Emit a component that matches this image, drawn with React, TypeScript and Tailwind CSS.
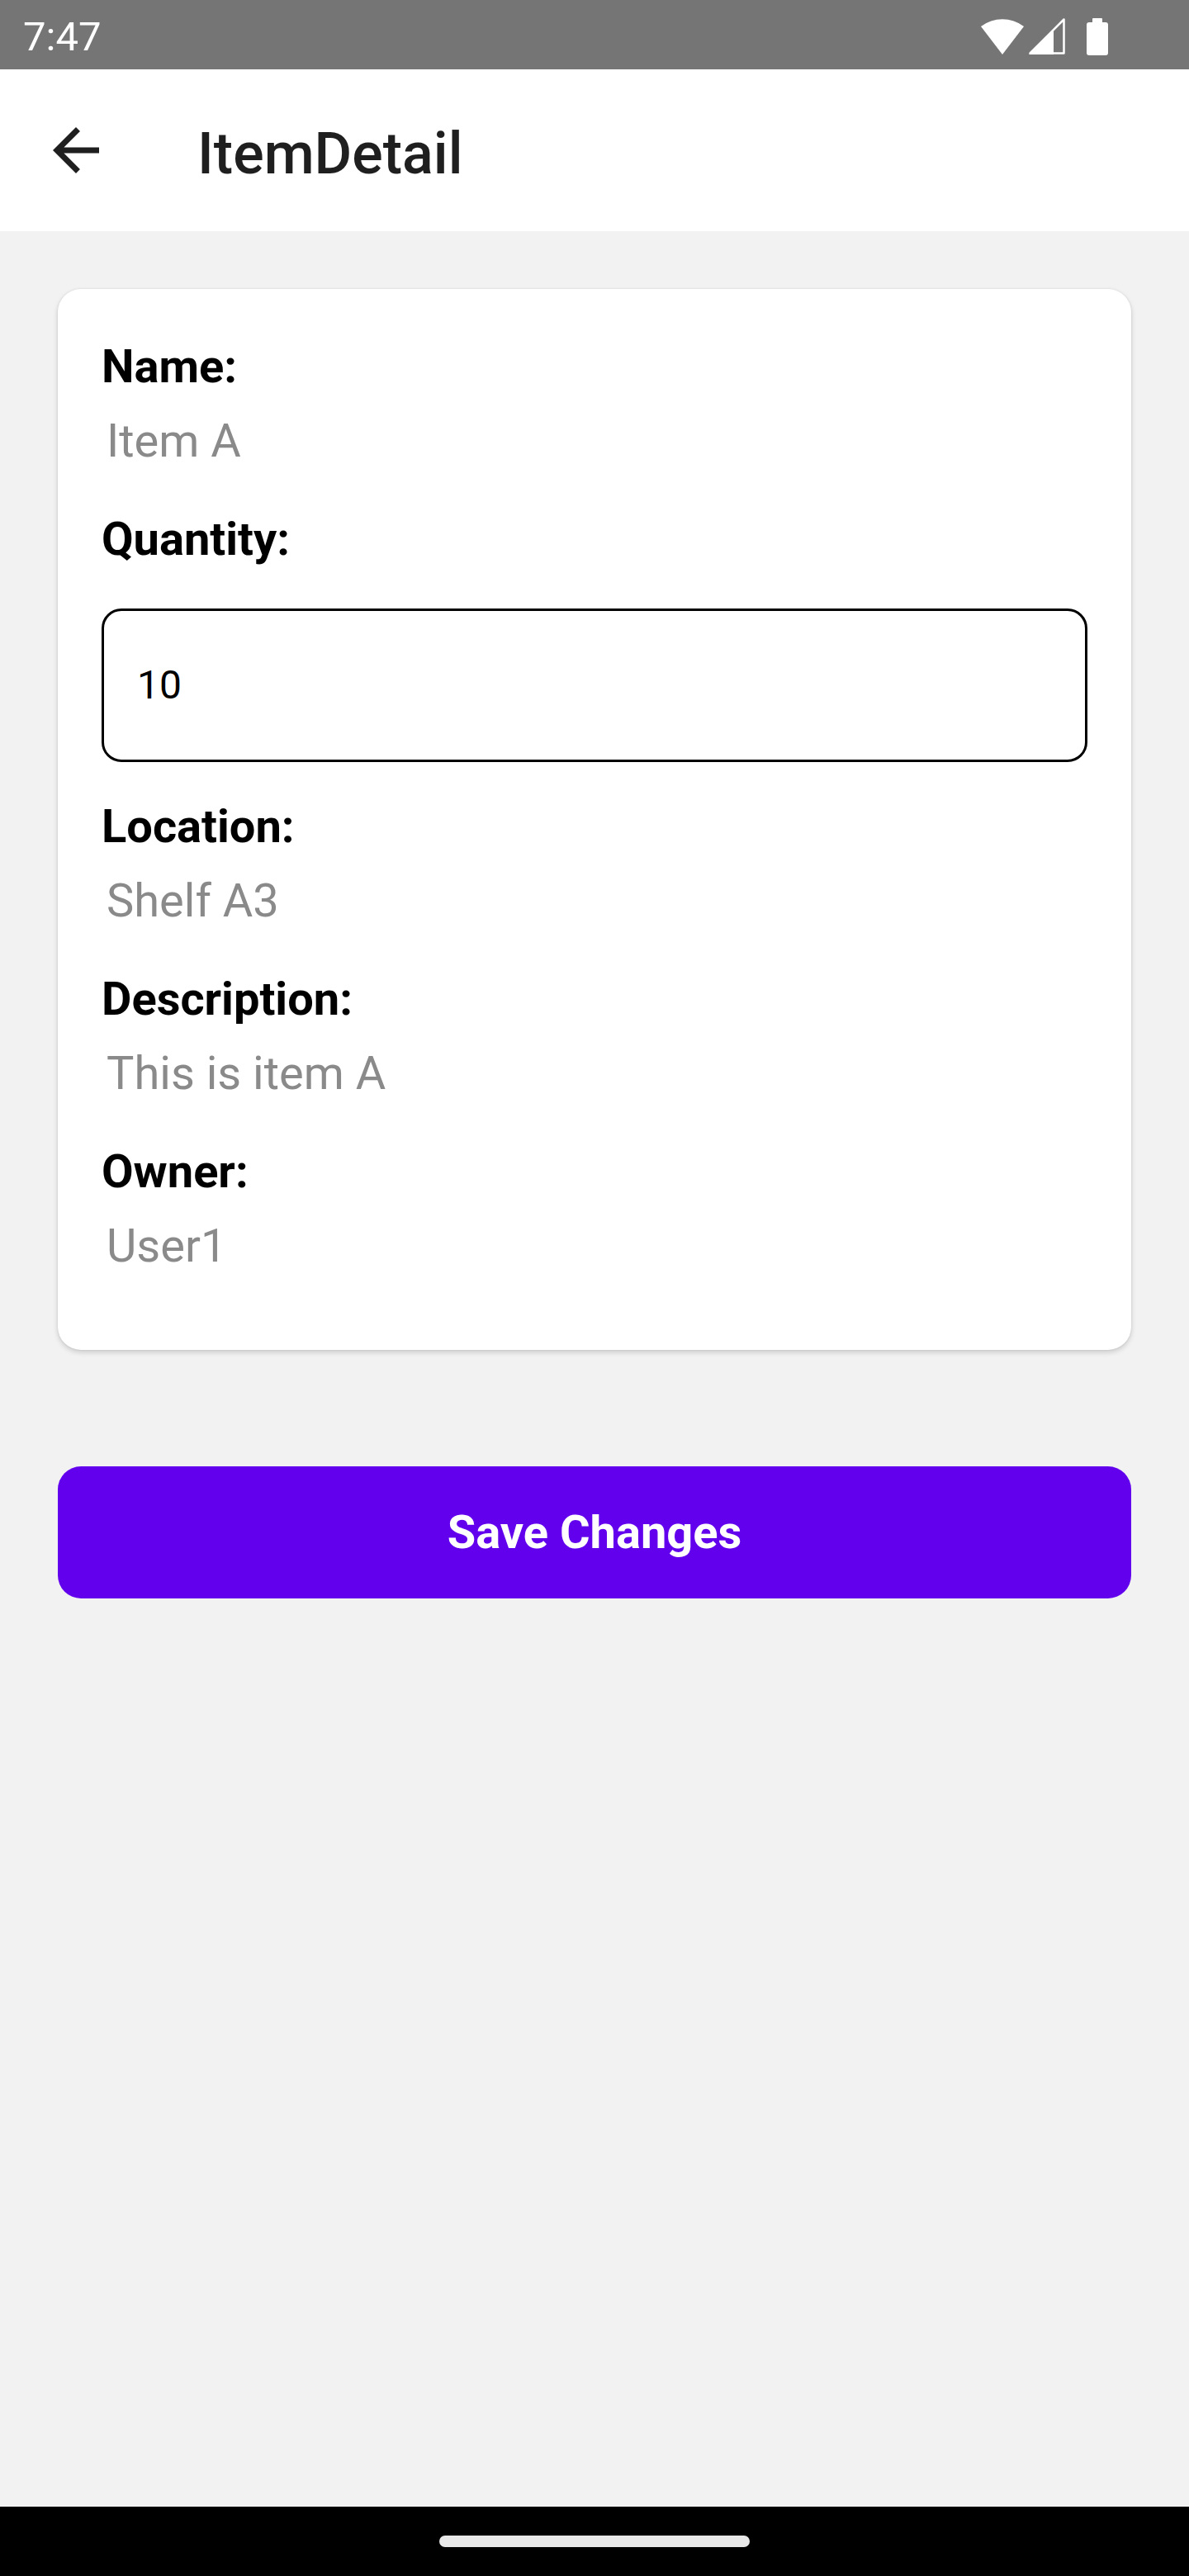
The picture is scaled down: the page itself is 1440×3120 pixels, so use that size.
import React from "react";

const StatusIcons = () => (
  <div className="flex items-center">
    <svg width="52" height="44" viewBox="0 0 52 44" className="mt-[3px]">
      <path d="M26 44 L0 10 A43 43 0 0 1 52 10 Z" fill="#fff" />
    </svg>
    <svg width="44" height="44" viewBox="0 0 44 44" className="ml-[6px] mt-[3px]">
      <path d="M1.5 42.5 L42.5 1.5 L42.5 42.5 Z" fill="none" stroke="#fff" strokeWidth="2.5" strokeLinejoin="round" />
      <path d="M0 44 L30 14 L30 44 Z" fill="#fff" />
    </svg>
    <svg width="26" height="45" viewBox="0 0 26 45" className="ml-[26px] mt-[4px]">
      <rect x="7" y="0" width="12" height="7" rx="1" fill="#fff" />
      <rect x="0" y="5" width="26" height="40" rx="3" fill="#fff" />
    </svg>
  </div>
);

const Field = ({ label, value, first }: { label: string; value: string; first?: boolean }) => (
  <div className={first ? "" : "mt-[53px]"}>
    <div className="text-[56px] font-bold leading-[66px] text-black">{label}</div>
    <div className="mt-[24px] pl-[6px] text-[56px] leading-[66px] text-[#8a8a8a]">{value}</div>
  </div>
);

export default function App() {
  return (
    <div
      className="flex min-h-[3120px] w-full flex-col bg-[#f2f2f2]"
      style={{ fontFamily: "Roboto, 'Noto Sans', sans-serif" }}
    >
      {/* status bar */}
      <div className="flex h-[84px] items-center justify-between bg-[#757575] pl-[28px] pr-[98px]">
        <span className="mt-[6px] text-[49px] text-white">7:47</span>
        <StatusIcons />
      </div>

      {/* top app bar */}
      <div className="flex h-[196px] items-center bg-white">
        <svg width="84" height="84" viewBox="0 0 24 24" className="ml-[50px]">
          <path
            d="M20 11H7.83l5.59-5.59L12 4l-8 8 8 8 1.41-1.41L7.83 13H20v-2z"
            fill="#1f1f1f"
          />
        </svg>
        <h1 className="ml-[105px] mt-[8px] text-[70px] font-medium text-[#1f1f1f]">ItemDetail</h1>
      </div>

      {/* content */}
      <div className="flex-1 px-[70px] pt-[70px]">
        <div className="rounded-[28px] bg-white px-[53px] pb-[93px] pt-[61px] shadow-[0_3px_6px_rgba(0,0,0,0.16),0_0_3px_rgba(0,0,0,0.08)]">
          <Field label="Name:" value="Item A" first />

          <div className="mt-[53px] text-[56px] font-bold leading-[66px] text-black">Quantity:</div>
          <div className="mt-[51px] flex h-[186px] items-center rounded-[24px] border-[3px] border-black pl-[40px]">
            <input
              readOnly
              value="10"
              className="w-full bg-transparent text-[48px] text-black outline-none"
            />
          </div>

          <div className="mt-[45px]">
            <div className="text-[56px] font-bold leading-[66px] text-black">Location:</div>
            <div className="mt-[24px] pl-[6px] text-[56px] leading-[66px] text-[#8a8a8a]">Shelf A3</div>
          </div>
          <Field label="Description:" value="This is item A" />
          <Field label="Owner:" value="User1" />
        </div>

        <button className="mt-[141px] flex h-[160px] w-full items-center justify-center rounded-[28px] bg-[#6200ee] text-[56px] font-bold text-white">
          Save Changes
        </button>
      </div>

      {/* nav bar */}
      <div className="flex h-[84px] items-center justify-center bg-black">
        <div className="h-[14px] w-[376px] rounded-full bg-[#e8e8e8]" />
      </div>
    </div>
  );
}
